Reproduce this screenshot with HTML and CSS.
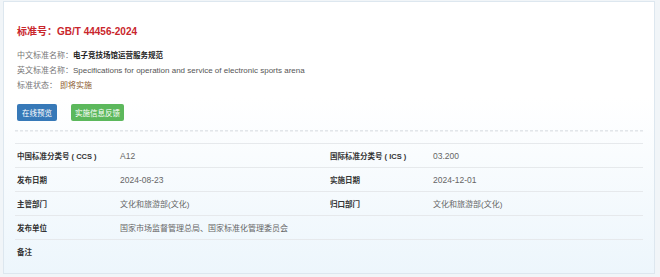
FILE: index.html
```html
<!DOCTYPE html>
<html lang="zh-CN">
<head>
<meta charset="utf-8">
<title>GB/T 44456-2024</title>
<link rel="stylesheet" href="styles.css">
</head>
<body>
<div class="panel">
  <h1 class="title">标准号：GB/T 44456-2024</h1>
  <div class="info">
    <div class="info-row"><span class="info-label">中文标准名称：</span><span class="info-cn">电子竞技场馆运营服务规范</span></div>
    <div class="info-row"><span class="info-label">英文标准名称：</span><span class="info-en">Specifications for operation and service of electronic sports arena</span></div>
    <div class="info-row"><span class="info-label">标准状态：</span><span class="info-status">即将实施</span></div>
  </div>
  <div class="actions">
    <span class="btn btn-blue">在线预览</span>
    <span class="btn btn-green">实施信息反馈</span>
  </div>
  <div class="sep"></div>
  <div class="table">
    <div class="cell label">中国标准分类号 ( CCS )</div>
    <div class="cell value"><span class="num">A12</span></div>
    <div class="cell label">国际标准分类号 ( ICS )</div>
    <div class="cell value"><span class="num">03.200</span></div>

    <div class="cell label">发布日期</div>
    <div class="cell value"><span class="num">2024-08-23</span></div>
    <div class="cell label">实施日期</div>
    <div class="cell value"><span class="num">2024-12-01</span></div>

    <div class="cell label">主管部门</div>
    <div class="cell value">文化和旅游部(文化)</div>
    <div class="cell label">归口部门</div>
    <div class="cell value">文化和旅游部(文化)</div>

    <div class="cell label">发布单位</div>
    <div class="cell value span3">国家市场监督管理总局、国家标准化管理委员会</div>

    <div class="cell label last">备注</div>
    <div class="cell value span3 last"></div>
  </div>
</div>
</body>
</html>
```

FILE: styles.css
```css
html, body {
  margin: 0;
  padding: 0;
}
body {
  background: #f1f5f8;
  font-family: "Liberation Sans", "Noto Sans CJK SC", sans-serif;
  width: 660px;
  height: 277px;
  overflow: hidden;
}
.panel {
  box-sizing: border-box;
  margin: 1px 0 0 3px;
  width: 652px;
  height: 273px;
  border: 1px solid #dde7ef;
  background: linear-gradient(to bottom, #ffffff 0%, #ffffff 35%, #edf6fc 100%);
  padding: 23px 11px 0 11px;
}
.title {
  margin: 0 0 0 2px;
  font-size: 10px;
  line-height: 14px;
  font-weight: bold;
  color: #c9262c;
}
.info {
  margin: 9px 0 0 2px;
  font-size: 8px;
  line-height: 15px;
}
.info-row {
  display: flex;
  align-items: baseline;
}
.info-label {
  color: #777;
}
.info-cn {
  color: #222;
  font-weight: bold;
  font-size: 7.5px;
}
.info-en {
  color: #555;
}
.info-status {
  color: #8c5a2e;
  margin-left: 3px;
}
.actions {
  display: flex;
  gap: 14px;
  margin: 11px 0 0 2px;
}
.btn {
  display: inline-flex;
  align-items: center;
  justify-content: center;
  height: 17px;
  padding: 0 4px;
  border-radius: 2px;
  color: #fff;
  font-size: 7.5px;
}
.btn-blue {
  background: #3779b8;
  width: 32px;
}
.btn-green {
  background: #5cb85c;
  width: 45px;
}
.sep {
  margin-top: 9px;
  border-top: 1px dashed #e2e6ea;
  border-bottom: 1px dashed #eef0f2;
  height: 0;
}
.table {
  margin-top: 11px;
  display: grid;
  grid-template-columns: 103px 210px 103px 1fr;
  border-top: 1px solid #e6e9ec;
  font-size: 8px;
}
.cell {
  height: 23px;
  display: flex;
  align-items: center;
  padding-left: 2px;
  border-bottom: 1px solid #e6e9ec;
}
.cell.last {
  border-bottom: none;
}
.label {
  font-weight: bold;
  color: #333;
  font-size: 7.5px;
}
.value {
  color: #666;
  font-size: 8px;
}
.num {
  font-size: 8.5px;
}
.span3 {
  grid-column: 2 / 5;
}
```
